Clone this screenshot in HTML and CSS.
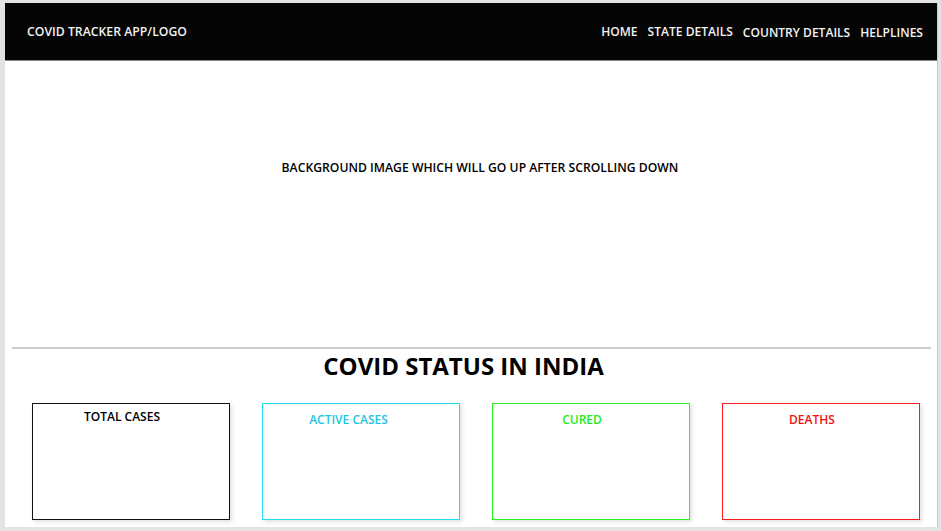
FILE: index.html
```html
<!DOCTYPE html>
<html lang="en">
<head>
<meta charset="utf-8">
<title>Covid Tracker</title>
<link rel="stylesheet" href="styles.css">
</head>
<body>
<div class="panel">
  <header class="topbar">
    <div class="logo">COVID TRACKER APP/LOGO</div>
    <nav class="nav">
      <a class="nav-item" href="#">HOME</a>
      <a class="nav-item" href="#">STATE DETAILS</a>
      <a class="nav-item nav-low" href="#">COUNTRY DETAILS</a>
      <a class="nav-item nav-low" href="#">HELPLINES</a>
    </nav>
  </header>
  <section class="hero">
    <p class="hero-text">BACKGROUND IMAGE WHICH WILL GO UP AFTER SCROLLING DOWN</p>
  </section>
  <hr class="divider">
  <h1 class="status-title">COVID STATUS IN INDIA</h1>
  <div class="cards">
    <div class="card card-total"><div class="card-title">TOTAL CASES</div></div>
    <div class="card card-active"><div class="card-title">ACTIVE CASES</div></div>
    <div class="card card-cured"><div class="card-title">CURED</div></div>
    <div class="card card-deaths"><div class="card-title">DEATHS</div></div>
  </div>
</div>
</body>
</html>
```
FILE: styles.css
```css
* { box-sizing: border-box; }
html, body { margin: 0; }
body {
  background: #e3e3e3;
  padding: 3px 3px 4px 5px;
  font-family: "Open Sans", "Noto Sans", "Liberation Sans", sans-serif;
}
.panel {
  width: 933px;
  height: 524px;
  background: #fff;
  border-right: 1px solid #c9c9c9;
  overflow: hidden;
}
.topbar {
  height: 58px;
  background: #050505;
  border-bottom: 1px solid #8a8a8a;
  display: flex;
  align-items: center;
  justify-content: space-between;
  padding: 0 14px 0 22px;
}
.logo {
  color: #f2f2f2;
  font-size: 12.25px;
  font-weight: 600;
}
.nav {
  display: flex;
  gap: 10px;
  align-items: center;
}
.nav-item {
  color: #f2f2f2;
  text-decoration: none;
  font-size: 12.05px;
  font-weight: 600;
}
.nav-low { padding-top: 2px; }
.hero {
  height: 286px;
  padding-top: 98px;
}
.hero-text {
  margin: 0;
  text-align: center;
  font-size: 12.2px;
  font-weight: 600;
  color: #000;
  padding-left: 18px;
}
.divider {
  margin: 0 6px 0 7px;
  border: 0;
  height: 2px;
  background: #cbcbcb;
}
.status-title {
  margin: 1px 0 0;
  text-align: center;
  font-size: 24px;
  line-height: 32px;
  font-weight: 700;
  color: #000;
  padding-right: 15px;
}
.cards {
  display: flex;
  gap: 32px;
  padding: 21px 0 0 27px;
}
.card {
  width: 198px;
  height: 117px;
  border: 1px solid #000;
  box-shadow: 2px 2px 4px rgba(0,0,0,0.12);
  padding-top: 7px;
}
.card-title {
  text-align: center;
  font-size: 12px;
  font-weight: 600;
  padding-right: 18px;
}
.card-total { border-color: #111; padding-top: 4px; }
.card-total .card-title { color: #000; }
.card-active { border-color: #1fdcef; }
.card-active .card-title { color: #1cc6e2; padding-right: 25px; }
.card-cured { border-color: #2af020; }
.card-cured .card-title { color: #25e81e; }
.card-deaths { border-color: #ff1a1a; }
.card-deaths .card-title { color: #f01010; }
```
